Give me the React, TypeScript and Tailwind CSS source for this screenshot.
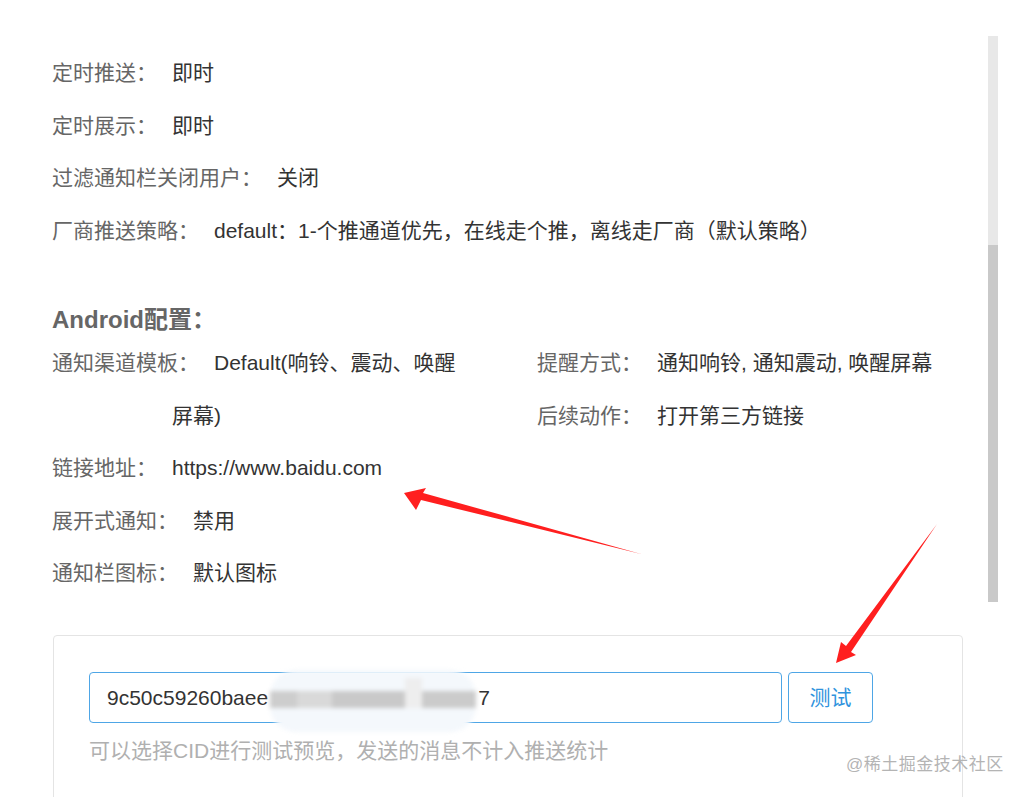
import React from "react";

type Item = {
  label: string;
  value: string;
};

const basicItems: Item[] = [
  { label: "定时推送：", value: "即时" },
  { label: "定时展示：", value: "即时" },
  { label: "过滤通知栏关闭用户：", value: "关闭" },
  { label: "厂商推送策略：", value: "default：1-个推通道优先，在线走个推，离线走厂商（默认策略）" },
];

const androidTail: Item[] = [
  { label: "链接地址：", value: "https://www.baidu.com" },
  { label: "展开式通知：", value: "禁用" },
  { label: "通知栏图标：", value: "默认图标" },
];

// label hangs out to the left via negative text-indent, wrapped value lines start at 172px
const Row = ({ item, className = "" }: { item: Item; className?: string }) => (
  <div className={`pl-[120px] -indent-[120px] leading-[52.5px] ${className}`}>
    <span className="text-[#666] mr-[15px]">{item.label}</span>
    <span className="text-[#333]">{item.value}</span>
  </div>
);

const Arrows = () => (
  <svg
    className="absolute left-0 top-0 pointer-events-none"
    width="1029"
    height="797"
    viewBox="0 0 1029 797"
  >
    {/* arrow pointing at the link */}
    <path d="M641 554 L421 500 L416 510 L404 493 L426 488 L423 493 Z" fill="#ff1f1f" />
    {/* arrow pointing at the test button */}
    <path d="M937 524 L851 652 L856 655 L836 663 L841 642 L846 646 Z" fill="#ff1f1f" />
  </svg>
);

export default function App() {
  return (
    <div
      className="relative w-[1029px] h-[797px] overflow-hidden bg-white text-[21px]"
      style={{ fontFamily: '"Liberation Sans", "Noto Sans CJK SC", sans-serif' }}
    >
      {/* detail panel with scrollbar */}
      <div className="flex h-[602px]">
        <div className="w-[988px] pl-[52px] pt-[47px]">
          {basicItems.map((it, i) => (
            <Row key={i} item={it} />
          ))}

          <div className="mt-[45px] h-[35px] leading-[35px] text-[24px] font-bold text-[#666]">
            Android配置：
          </div>

          <div className="flex">
            <Row
              className="w-[414px]"
              item={{ label: "通知渠道模板：", value: "Default(响铃、震动、唤醒屏幕)" }}
            />
            <div className="ml-[71px]">
              <Row item={{ label: "提醒方式：", value: "通知响铃, 通知震动, 唤醒屏幕" }} />
              <Row item={{ label: "后续动作：", value: "打开第三方链接" }} />
            </div>
          </div>

          {androidTail.map((it, i) => (
            <Row key={i} item={it} />
          ))}
        </div>

        <div className="mt-[36px] w-[10px] flex flex-col">
          <div className="h-[209px] bg-[#e8e8e8]" />
          <div className="flex-1 bg-[#c9c9c9]" />
        </div>
      </div>

      {/* test card */}
      <div className="ml-[53px] mt-[33px] w-[910px] h-[200px] border border-[#e4e4e4] rounded-[4px] pl-[35px] pt-[36px]">
        <div className="flex items-center gap-[6px]">
          <div className="relative w-[693px] h-[51px] border border-[#4ea6e6] rounded-[4px] flex items-center pl-[17px] text-[#333]">
            <span>9c50c59260baee</span>
            <span className="ml-[210px]">7</span>
            {/* blurred-out part of the cid */}
            <div className="absolute left-[180px] top-[-3px] w-[206px] h-[62px] blur-[2px]">
              <div className="absolute inset-0 rounded-[26px] bg-[#f4f8fc]" />
              <div className="absolute left-0 top-[21px] h-[17px] w-[27px] bg-[#cdcdcd]" />
              <div className="absolute left-[27px] top-[21px] h-[17px] w-[35px] bg-[#d9d9d9]" />
              <div className="absolute left-[62px] top-[21px] h-[17px] w-[73px] bg-[#c9c9c9]" />
              <div className="absolute left-[135px] top-[8px] h-[30px] w-[17px] bg-[#eeeeee]" />
              <div className="absolute left-[152px] top-[21px] h-[17px] w-[54px] bg-[#cbcbcb]" />
            </div>
          </div>
          <button className="w-[85px] h-[51px] border border-[#4ea6e6] rounded-[4px] text-[#2f93dd] bg-white">
            测试
          </button>
        </div>
        <div className="mt-[13px] leading-[30px] text-[#b0b0b0]">
          可以选择CID进行测试预览，发送的消息不计入推送统计
        </div>
      </div>

      <Arrows />

      {/* watermark */}
      <div className="absolute left-[846px] top-[752px] text-[17px] text-[#b4b4b4] tracking-[0.5px]">
        @稀土掘金技术社区
      </div>
    </div>
  );
}
